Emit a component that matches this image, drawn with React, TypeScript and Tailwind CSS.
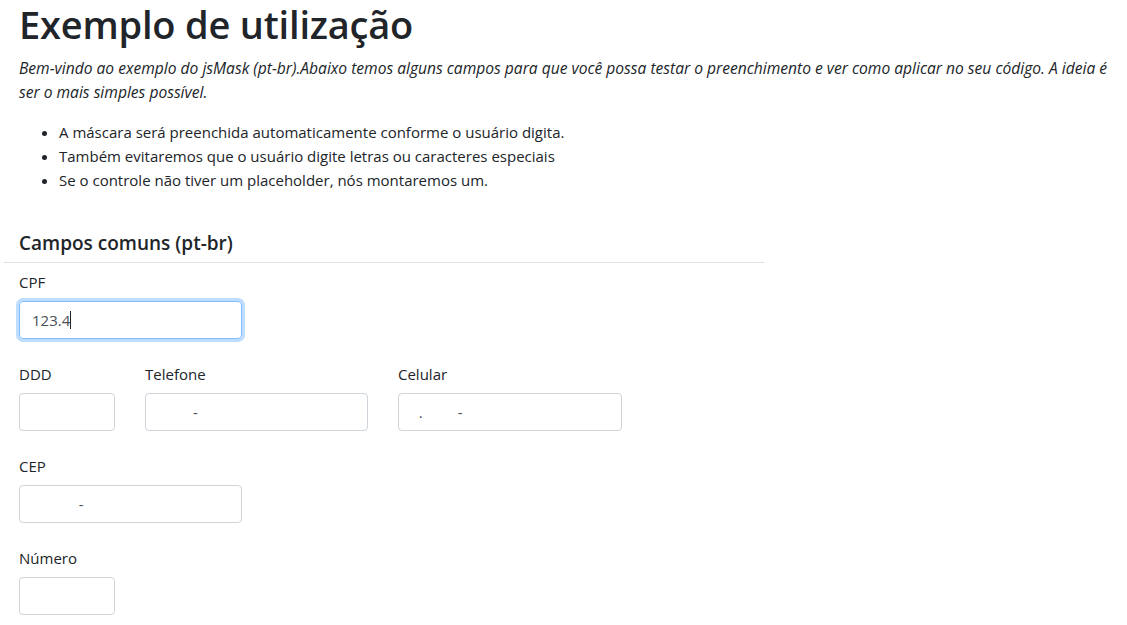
import React from "react";

const font = { fontFamily: '"Open Sans", "Noto Sans", sans-serif' };

function Field({
  label,
  width,
  value,
  focused,
}: {
  label: string;
  width: string;
  value?: string;
  focused?: boolean;
}) {
  return (
    <div className="flex flex-col">
      <label className="relative top-px text-[15px] leading-6 mb-2 text-[#212529]">{label}</label>
      <div className="relative">
        <input
          readOnly
          value={value ?? ""}
          className={
            focused
              ? `${width} h-[38px] rounded-[4px] border border-[#80bdff] px-3 text-[15px] text-[#495057] outline-none shadow-[0_0_0_3px_rgba(0,123,255,0.25)]`
              : `${width} h-[38px] rounded-[4px] border border-[#ced4da] px-3 text-[15px] text-[#495057] outline-none whitespace-pre`
          }
        />
        {focused && <span className="absolute left-[51px] top-[10px] h-[18px] w-px bg-[#212529]" />}
      </div>
    </div>
  );
}

export default function App() {
  return (
    <div className="w-[1127px] h-[625px] overflow-hidden bg-white text-[#212529]" style={font}>
      <div className="pl-[19px] pr-[10px]">
        <h1 className="text-[38px] leading-[48px] font-semibold mb-2 tracking-[-0.2px]">Exemplo de utilização</h1>
        <p className="italic text-[15.6px] leading-6 mb-4">
          Bem-vindo ao exemplo do jsMask (pt-br).Abaixo temos alguns campos para que você possa testar o
          preenchimento e ver como aplicar no seu código. A ideia é
          <br />
          ser o mais simples possível.
        </p>
        <ul className="list-disc pl-10 text-[15px] leading-6 mb-4">
          <li>A máscara será preenchida automaticamente conforme o usuário digita.</li>
          <li>Também evitaremos que o usuário digite letras ou caracteres especiais</li>
          <li>Se o controle não tiver um placeholder, nós montaremos um.</li>
        </ul>
      </div>

      <div className="ml-[4px] w-[760px] border-b border-[#dee2e6] pl-[15px] pt-[23px] pb-[7px]">
        <h5 className="text-[19px] leading-6 font-semibold">Campos comuns (pt-br)</h5>
      </div>

      <div className="pl-[19px] pt-[6px] flex flex-col gap-[22px]">
        <Field label="CPF" width="w-[223px]" value="123.4" focused />
        <div className="flex gap-[30px]">
          <Field label="DDD" width="w-[96px]" />
          <Field label="Telefone" width="w-[223px]" value={"         -"} />
          <Field label="Celular" width="w-[224px]" value={"  .         -"} />
        </div>
        <Field label="CEP" width="w-[223px]" value={"            -"} />
        <Field label="Número" width="w-[96px]" />
      </div>
    </div>
  );
}
